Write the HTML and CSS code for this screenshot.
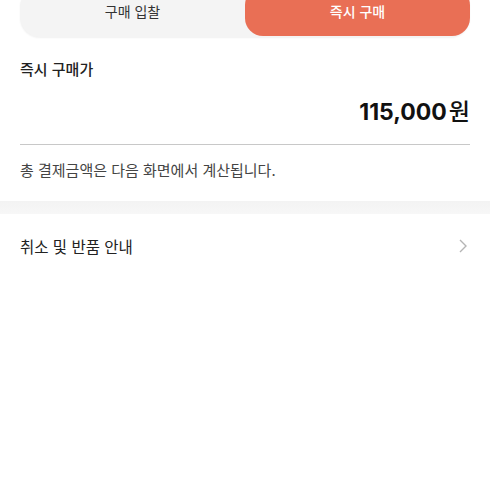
FILE: index.html
```html
<!DOCTYPE html>
<html lang="ko">
<head>
  <meta charset="UTF-8">
  <meta name="viewport" content="width=device-width, initial-scale=1.0">
  <title>즉시 구매</title>
  <link rel="stylesheet" href="styles.css">
</head>
<body>

<main>
  <div class="tabs">
    <button class="tab">구매 입찰</button>
    <button class="tab tab-active">즉시 구매</button>
  </div>

  <section class="price-section">
    <h3 class="price-label">즉시 구매가</h3>
    <div class="price-value">115,000<span class="won">원</span></div>
    <p class="price-note">총 결제금액은 다음 화면에서 계산됩니다.</p>
  </section>

  <div class="divider-band"></div>

  <a class="info-row" href="#">
    <span>취소 및 반품 안내</span>
    <svg class="chevron" width="10" height="16" viewBox="0 0 10 16">
      <path d="M2 2 L8 8 L2 14" fill="none" stroke="#b5b5b5" stroke-width="1.4" />
    </svg>
  </a>
</main>

</body>
</html>
```

FILE: styles.css
```css
body {
  margin: 0;
  background-color: #fff;
  font-family: "Noto Sans CJK KR", "Noto Sans", sans-serif;
  color: #222;
}
.tabs {
  display: flex;
  height: 50px;
  margin: -13px 20px 0 20px;
  background-color: #f4f4f4;
  border-radius: 20px;
  box-shadow: 0 1px 2px rgba(0, 0, 0, 0.06);
}
.tab {
  flex: 1;
  border: none;
  background: none;
  font-family: inherit;
  font-size: 14px;
  color: #333;
  padding: 0 0 2px 0;
  border-radius: 18px;
  cursor: pointer;
}
.tab-active {
  background-color: #e96f55;
  color: #fff;
  font-weight: 500;
  margin-bottom: 1px;
}
.price-section {
  padding: 0 20px;
}
.price-label {
  margin: 21px 0 0 0;
  font-size: 15px;
  font-weight: 500;
  color: #222;
}
.price-value {
  margin-top: 14px;
  text-align: right;
  font-family: Inter, "Noto Sans CJK KR", sans-serif;
  font-size: 23px;
  font-weight: 700;
  color: #111;
  padding-bottom: 17px;
  border-bottom: 1px solid #c8c8c8;
}
.won {
  font-family: "Noto Sans CJK KR", sans-serif;
  font-weight: 500;
  margin-left: 2px;
}
.price-note {
  margin: 14px 0 0 0;
  font-size: 15px;
  line-height: 22px;
  color: #444;
}
.divider-band {
  height: 13px;
  margin-top: 20px;
  background: linear-gradient(#f3f3f3, #f7f7f7);
}
.info-row {
  display: flex;
  justify-content: space-between;
  align-items: center;
  padding: 21px 22px 20px 20px;
  font-size: 15.5px;
  line-height: 22px;
  color: #222;
  text-decoration: none;
}
.chevron {
  display: block;
}
```
